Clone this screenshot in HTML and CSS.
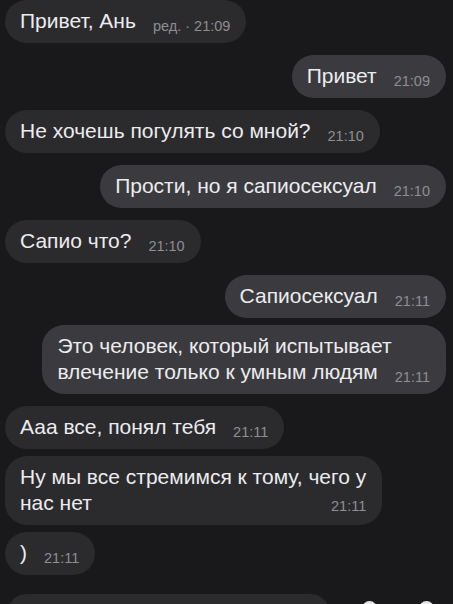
FILE: index.html
```html
<!DOCTYPE html>
<html lang="ru">
<head>
    <meta charset="UTF-8">
    <meta name="viewport" content="width=device-width, initial-scale=1.0">
    <title>Чат</title>
    <link rel="stylesheet" href="styles.css">
</head>
<body>
    <div class="chat">
        <div class="msg in first">
            <span class="text">Привет, Ань</span><span class="time">ред. · 21:09</span>
        </div>
        <div class="msg out">
            <span class="text">Привет</span><span class="time">21:09</span>
        </div>
        <div class="msg in">
            <span class="text">Не хочешь погулять со мной?</span><span class="time">21:10</span>
        </div>
        <div class="msg out">
            <span class="text">Прости, но я сапиосексуал</span><span class="time">21:10</span>
        </div>
        <div class="msg in">
            <span class="text">Сапио что?</span><span class="time">21:10</span>
        </div>
        <div class="msg out">
            <span class="text">Сапиосексуал</span><span class="time">21:11</span>
        </div>
        <div class="msg out same">
            <span class="text">Это человек, который испытывает<br>влечение только к умным людям</span><span class="time">21:11</span>
        </div>
        <div class="msg in">
            <span class="text">Ааа все, понял тебя</span><span class="time">21:11</span>
        </div>
        <div class="msg in same">
            <span class="text">Ну мы все стремимся к тому, чего у<br>нас нет</span><span class="time end">21:11</span>
        </div>
        <div class="msg in same">
            <span class="text">)</span><span class="time">21:11</span>
        </div>

        <!-- input bar, cut off by the bottom edge -->
        <div class="composer">
            <div class="field"></div>
            <div class="icons">
                <span class="dot"></span>
                <span class="dot"></span>
            </div>
        </div>
    </div>
</body>
</html>
```

FILE: styles.css
```css
body {
    margin: 0;
    height: 604px;
    overflow: hidden;
    background-color: #19191c;
    font-family: "Liberation Sans", Arial, sans-serif;
}
.chat {
    display: flex;
    flex-direction: column;
    padding: 0 7px 0 5px;
}
.msg {
    max-width: 380px;
    padding: 8px 16px 9px 15px;
    border-radius: 22px;
    font-size: 21px;
    line-height: 26px;
    color: #ececee;
    margin-top: 12px;
}
.msg.first {
    margin-top: 0;
}
.msg.same {
    margin-top: 7px;
}
.msg.in {
    align-self: flex-start;
    background-color: #2b2b2e;
}
.msg.out {
    align-self: flex-end;
    background-color: #3b3b3f;
}
.time {
    display: inline-block;
    margin-left: 17px;
    font-size: 14.5px;
    line-height: 1;
    color: #8e8e93;
    vertical-align: -3px;
}
.time.end {
    float: right; /* sits at the right of the last line */
    margin-top: 9px;
}
.composer {
    display: flex;
    align-items: flex-start;
    margin-top: 19px;
    padding-left: 2px;
}
.field {
    width: 323px;
    height: 40px;
    background-color: #2b2b2e;
    border-radius: 20px;
}
.icons {
    display: flex;
    gap: 42px;
    margin: 7px 0 0 32px;
}
.dot {
    width: 15px;
    height: 15px;
    border-radius: 50%;
    background-color: #e6e6e8;
}
```
